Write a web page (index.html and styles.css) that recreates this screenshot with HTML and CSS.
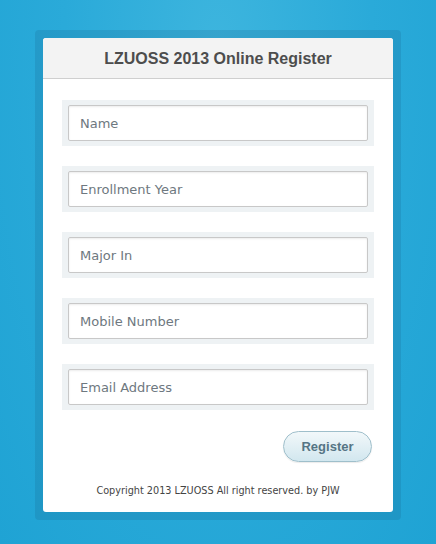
FILE: index.html
```html
<!DOCTYPE html>
<html>
<head>
<meta charset="utf-8">
<link rel="stylesheet" href="styles.css">
</head>
<body>
<div class="frame">
  <div class="card">
    <div class="header">LZUOSS 2013 Online Register</div>
    <form class="body">
      <div class="group"><input class="field" placeholder="Name"></div>
      <div class="group"><input class="field" placeholder="Enrollment Year"></div>
      <div class="group"><input class="field" placeholder="Major In"></div>
      <div class="group"><input class="field" placeholder="Mobile Number"></div>
      <div class="group"><input class="field" placeholder="Email Address"></div>
      <div class="actions"><button type="button" class="btn">Register</button></div>
      <div class="footer">Copyright 2013 LZUOSS All right reserved. by PJW</div>
    </form>
  </div>
</div>
</body>
</html>
```
FILE: styles.css
```css
html, body {
  margin: 0;
  height: 100%;
}
body {
  background: radial-gradient(ellipse at 50% 10%, #3db5de 0%, #2aaad9 50%, #1fa3d4 100%);
  font-family: "DejaVu Sans", "Open Sans", sans-serif;
  padding: 30px 35px 0 35px;
  box-sizing: border-box;
}
.frame {
  width: 366px;
  padding: 8px;
  box-sizing: border-box;
  background: rgba(20, 90, 130, 0.18);
  border-radius: 4px;
}
.card {
  background: #fff;
  border-radius: 3px;
  overflow: hidden;
}
.header {
  height: 41px;
  box-sizing: border-box;
  background: #f3f3f3;
  border-bottom: 1px solid #cfcfcf;
  text-align: center;
  font-family: "Liberation Sans", Arial, sans-serif;
  font-weight: bold;
  font-size: 16px;
  line-height: 41px;
  color: #4d4d4d;
}
.body {
  padding: 21px 19px 16px 19px;
  display: flex;
  flex-direction: column;
  margin: 0;
}
.group {
  background: #eef2f4;
  padding: 5px 6px;
  margin-bottom: 20px;
}
.field {
  display: block;
  width: 100%;
  box-sizing: border-box;
  height: 36px;
  border: 1px solid #c8c8c8;
  border-radius: 2px;
  box-shadow: inset 0 1px 2px rgba(0,0,0,0.08);
  padding: 0 11px;
  font-family: inherit;
  font-size: 13px;
  background: #fff;
  outline: none;
}
.field::placeholder {
  color: #6e7880;
}
.actions {
  display: flex;
  justify-content: flex-end;
  padding-right: 2px;
}
.btn {
  width: 89px;
  height: 31px;
  margin-top: 1px;
  border-radius: 16px;
  border: 1px solid #9fbfcb;
  background: linear-gradient(#f2f8fa, #d2e7ef);
  box-shadow: 0 1px 1px rgba(0,0,0,0.08);
  font-family: "Liberation Sans", Arial, sans-serif;
  font-weight: bold;
  font-size: 13px;
  color: #557585;
  padding: 0;
}
.footer {
  margin-top: 23px;
  text-align: center;
  font-size: 9.7px;
  color: #444;
}
```
